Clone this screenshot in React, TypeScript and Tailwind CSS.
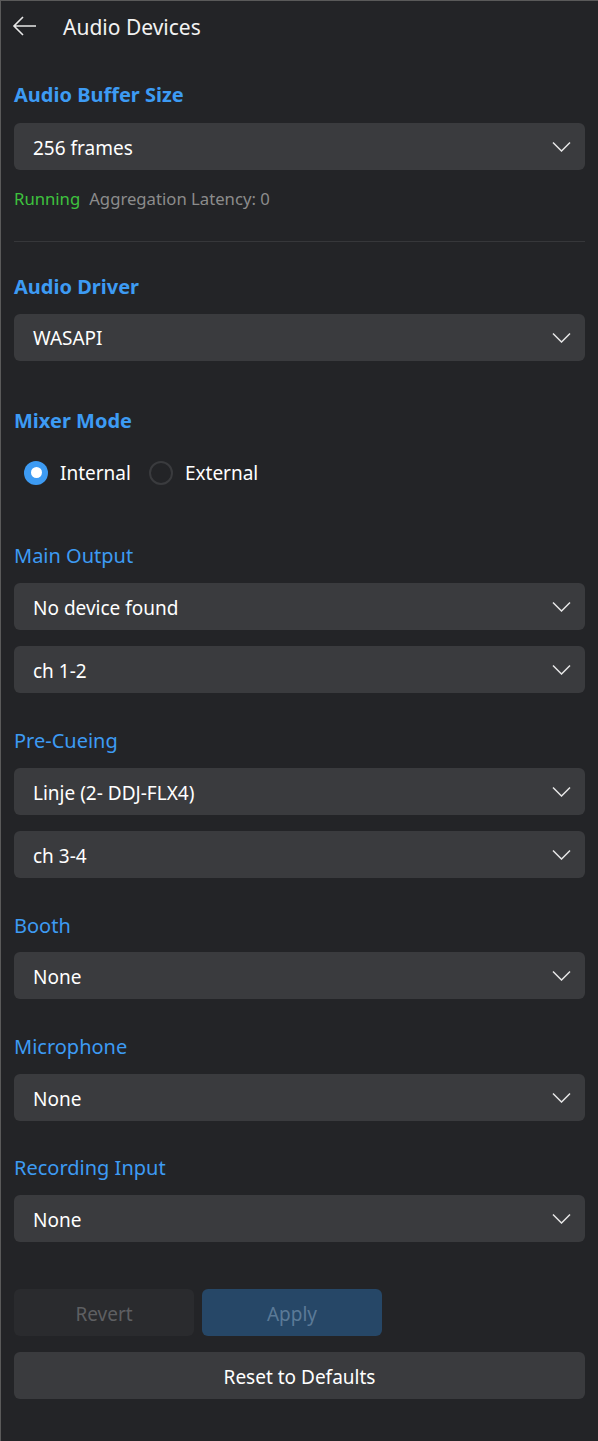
const Chevron = () => (
  <svg width="19" height="11" viewBox="0 0 19 11" fill="none" stroke="#e6e6e6" strokeWidth="1.5">
    <path d="M1 1.5l8.5 8.5L18 1.5" />
  </svg>
);

const Select = ({ value }: { value: string }) => (
  <div className="h-[47px] rounded-md bg-[#3a3b3e] flex items-center justify-between pl-[19px] pr-[14px] text-[19px] text-white">
    <span className="pt-[3px]">{value}</span>
    <Chevron />
  </div>
);

const Heading = ({ children }: { children: string }) => (
  <div className="text-[20px] font-bold text-[#3d9bf3] leading-none">{children}</div>
);

const Label = ({ children }: { children: string }) => (
  <div className="text-[20px] text-[#3d9bf3] leading-none">{children}</div>
);

export default function App() {
  return (
    <div
      className="w-[598px] h-[1441px] bg-[#232427] border-l border-t border-[#5a5a5a] text-white overflow-hidden"
      style={{ fontFamily: '"Noto Sans", "Open Sans", sans-serif' }}
    >
      <div className="h-[52px] flex items-center pl-[11px]">
        <svg width="26" height="22" viewBox="0 0 26 22" fill="none" stroke="#e8e8e8" strokeWidth="1.6" className="mt-[-2px]">
          <path d="M24 11H2M11 2L2 11l9 9" />
        </svg>
        <span className="ml-[25px] text-[21px] text-[#f2f2f2] mt-[2px]">Audio Devices</span>
      </div>

      <div className="px-[13px]">
        <div className="mt-[32px]"><Heading>Audio Buffer Size</Heading></div>
        <div className="mt-[18px]"><Select value="256 frames" /></div>
        <div className="mt-[21px] text-[16.7px] leading-none flex gap-[9px]">
          <span className="text-[#3ec23e]">Running</span>
          <span className="text-[#8c8c8c]">Aggregation Latency: 0</span>
        </div>
        <div className="mt-[33px] h-px bg-[#36373a]" />

        <div className="mt-[35px]"><Heading>Audio Driver</Heading></div>
        <div className="mt-[17px]"><Select value="WASAPI" /></div>

        <div className="mt-[50px]"><Heading>Mixer Mode</Heading></div>
        <div className="mt-[28px] flex items-center pl-[10px] text-[19px]">
          <span className="w-[24px] h-[24px] rounded-full bg-[#3d9bf3] flex items-center justify-center">
            <span className="w-[11px] h-[11px] rounded-full bg-white" />
          </span>
          <span className="ml-[12px]">Internal</span>
          <span className="ml-[18px] w-[24px] h-[24px] rounded-full border-2 border-[#3a3b3e]" />
          <span className="ml-[12px]">External</span>
        </div>

        <div className="mt-[59px]"><Label>Main Output</Label></div>
        <div className="mt-[17px] flex flex-col gap-[16px]">
          <Select value="No device found" />
          <Select value="ch 1-2" />
        </div>

        <div className="mt-[38px]"><Label>Pre-Cueing</Label></div>
        <div className="mt-[17px] flex flex-col gap-[16px]">
          <Select value="Linje (2- DDJ-FLX4)" />
          <Select value="ch 3-4" />
        </div>

        <div className="mt-[38px]"><Label>Booth</Label></div>
        <div className="mt-[16px]"><Select value="None" /></div>

        <div className="mt-[38px]"><Label>Microphone</Label></div>
        <div className="mt-[17px]"><Select value="None" /></div>

        <div className="mt-[37px]"><Label>Recording Input</Label></div>
        <div className="mt-[17px]"><Select value="None" /></div>

        <div className="mt-[47px] flex gap-[8px] text-[19px]">
          <div className="w-[180px] h-[47px] pt-[3px] rounded-md bg-[#2a2b2e] text-[#5e5f62] flex items-center justify-center">Revert</div>
          <div className="w-[180px] h-[47px] pt-[3px] rounded-md bg-[#264767] text-[#5b7a97] flex items-center justify-center">Apply</div>
        </div>
        <div className="mt-[16px] h-[47px] pt-[3px] rounded-md bg-[#3a3b3e] flex items-center justify-center text-[19px]">Reset to Defaults</div>
      </div>
    </div>
  );
}
